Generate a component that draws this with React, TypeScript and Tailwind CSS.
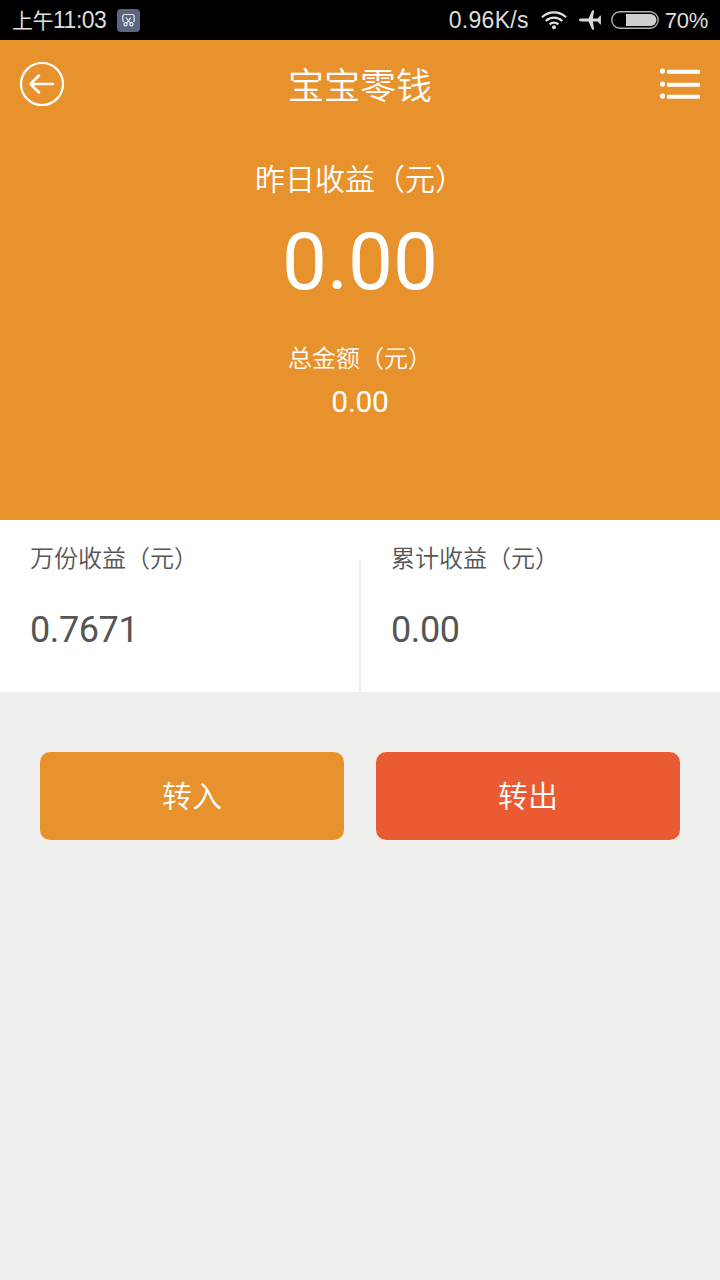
import type { ReactNode } from "react";

function ScreenshotIcon() {
  return (
    <svg width="23" height="23" viewBox="0 0 23 23" fill="none">
      <rect width="23" height="23" rx="4" fill="#5c6680" />
      <path
        d="M7 12.500H6.500q-.7 0-.7-1V7.500a2 2 0 0 1 2-2h7.400a2 2 0 0 1 2 2v4q0 1-.7 1H16M9 8.500l4.700 6M14 8.500l-4.700 6"
        stroke="#e6e8ee"
        strokeWidth="1.200"
      />
      <circle cx="8.600" cy="15.300" r="1.600" stroke="#e6e8ee" strokeWidth="1.200" />
      <circle cx="14.400" cy="15.300" r="1.600" stroke="#e6e8ee" strokeWidth="1.200" />
    </svg>
  );
}

function WifiIcon() {
  return (
    <svg width="26" height="20" viewBox="0 0 26 20" fill="none" stroke="#e0e0e0" strokeWidth="2.300">
      <path d="M1 7.300a17.200 17.200 0 0 1 24 0" />
      <path d="M4.800 11a11.700 11.700 0 0 1 16.400 0" />
      <path d="M8.600 14.400a6.400 6.400 0 0 1 8.800 0" />
      <circle cx="13" cy="17.200" r="2" fill="#e0e0e0" stroke="none" />
    </svg>
  );
}

function PlaneIcon() {
  return (
    <svg width="24" height="20" viewBox="0 0 24 20" fill="#d8d8d8">
      <path d="M1 10c0-.9 1-1.400 2.200-1.400H10.500L14 .8Q14.300.2 15 .2h.6q.6 0 .5.700L14.800 8.600h5L22 5.800q.3-.4.900-.3v9q-.6.100-.9-.3l-2.200-2.800h-5l1.300 7.700q.1.700-.5.700H15q-.7 0-1-.6l-3.500-7.800H3.200C2 11.400 1 10.900 1 10z" />
    </svg>
  );
}

function BatteryIcon() {
  return (
    <svg width="48" height="18" viewBox="0 0 48 18" fill="none">
      <rect x=".75" y=".75" width="46.500" height="16.500" rx="8.250" stroke="#b4b4b4" strokeWidth="1.300" />
      <path d="M15 3h24.500a6 6 0 0 1 0 12H15z" fill="#cfcfcf" />
    </svg>
  );
}

function BackIcon() {
  return (
    <svg width="44" height="44" viewBox="0 0 44 44" fill="none" stroke="#fff">
      <circle cx="22" cy="22" r="21" strokeWidth="2.200" />
      <path d="M33 22H11M19 13.500L10.500 22l8.500 8.500" strokeWidth="2.500" strokeLinecap="round" strokeLinejoin="round" />
    </svg>
  );
}

function MenuIcon() {
  return (
    <svg width="41" height="32" viewBox="0 0 41 32" fill="#fff">
      {[3.5, 16.5, 28.5].map((y) => (
        <g key={y}>
          <circle cx="3.500" cy={y - 0.4} r="2.600" />
          <rect x="8" y={y - 1.7} width="33" height="4" rx="1" />
        </g>
      ))}
    </svg>
  );
}

function StatusBar() {
  return (
    <div className="flex h-10 items-center justify-between bg-black pl-3 pr-3 font-['Liberation_Sans','Noto_Sans_CJK_SC',sans-serif] text-[23px] leading-10 text-[#dedede]">
      <div className="flex items-center">
        <span className="w-[105px] whitespace-nowrap tracking-[-0.5px]">
          <span className="text-[21px]">上午</span>11:03
        </span>
        <ScreenshotIcon />
      </div>
      <div className="flex items-center">
        <span className="mr-3 tracking-[0.3px]">0.96K/s</span>
        <WifiIcon />
        <span className="ml-[11px] mr-[9px]">
          <PlaneIcon />
        </span>
        <BatteryIcon />
        <span className="ml-1.5 pt-px text-[22px] tracking-[-0.3px]">70%</span>
      </div>
    </div>
  );
}

function Stat({ label, value }: { label: string; value: string }) {
  return (
    <div className="flex flex-1 flex-col pl-[30px] pt-[19px]">
      <span className="font-['Noto_Sans_CJK_SC',sans-serif] text-2xl leading-9 font-[350]">{label}</span>
      <span className="mt-[34px] text-4xl leading-[42px] tracking-[-0.4px]">{value}</span>
    </div>
  );
}

function ActionButton({ className, children }: { className: string; children: ReactNode }) {
  return (
    <button
      type="button"
      className={`h-[88px] flex-1 rounded-[10px] pb-1 font-['Noto_Sans_CJK_SC',sans-serif] text-[30px] leading-[84px] font-[350] text-white ${className}`}
    >
      {children}
    </button>
  );
}

export default function App() {
  return (
    <div
      lang="zh-CN"
      className="flex h-[1280px] w-[720px] flex-col overflow-hidden bg-[#eeeeec] font-[Roboto,'Noto_Sans_CJK_SC',sans-serif]"
    >
      <StatusBar />

      <section className="h-[480px] bg-[#e7922d] text-center text-white">
        <header className="flex h-[88px] items-center justify-between px-5">
          <BackIcon />
          <h1 className="pr-[3px] pb-0.5 font-['Noto_Sans_CJK_SC',sans-serif] text-4xl font-[350]">宝宝零钱</h1>
          <MenuIcon />
        </header>
        <p className="mt-[27px] font-['Noto_Sans_CJK_SC',sans-serif] text-[30px] leading-[44px] font-[350]">
          昨日收益（元）
        </p>
        <p className="mt-4 text-[80px] leading-[94px]">0.00</p>
        <p className="mt-[30px] font-['Noto_Sans_CJK_SC',sans-serif] text-2xl leading-9 font-[350]">总金额（元）</p>
        <p className="mt-[9px] text-[30px] leading-9 tracking-[-0.3px]">0.00</p>
      </section>

      <section className="flex h-[172px] bg-white text-[#555]">
        <Stat label="万份收益（元）" value="0.7671" />
        <div className="mt-10 w-0.5 bg-[#ebebeb]" />
        <Stat label="累计收益（元）" value="0.00" />
      </section>

      <div className="flex gap-8 px-10 pt-[60px]">
        <ActionButton className="bg-[#e7922d]">转入</ActionButton>
        <ActionButton className="bg-[#eb5b33]">转出</ActionButton>
      </div>
    </div>
  );
}
